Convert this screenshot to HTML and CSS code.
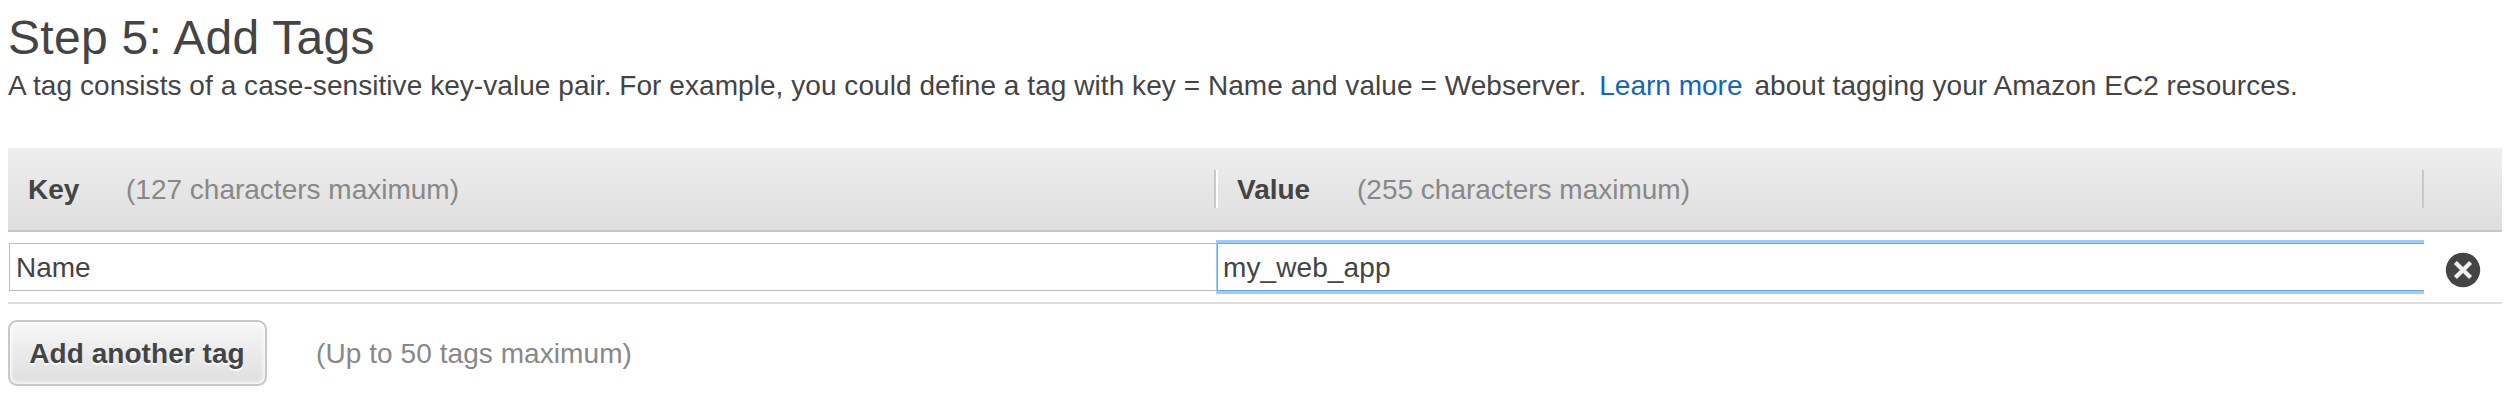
FILE: index.html
```html
<!DOCTYPE html>
<html lang="en">
<head>
<meta charset="utf-8">
<title>Step 5: Add Tags</title>
<link rel="stylesheet" href="styles.css">
</head>
<body>
<main class="page">
  <h1 class="title">Step 5: Add Tags</h1>
  <p class="intro"><span class="lead">A tag consists of a case-sensitive key-value pair. For example, you could define a tag with key = Name and value = Webserver.</span><a class="link" href="#">Learn more</a><span class="tail">about tagging your Amazon EC2 resources.</span></p>
  <section class="table">
    <div class="row head">
      <div class="cell"><strong class="label key">Key</strong><span class="hint">(127 characters maximum)</span></div>
      <div class="cell"><strong class="label value">Value</strong><span class="hint">(255 characters maximum)</span></div>
      <div class="cell"></div>
    </div>
    <div class="row body">
      <div class="field">Name</div>
      <div class="field focused">my_web_app</div>
      <button class="remove" aria-label="Remove">
        <svg width="36" height="36" viewBox="0 0 36 36"><circle cx="18" cy="18" r="17.2" fill="#444"/><path d="M10.4 10.4 25.6 25.6M25.6 10.4 10.4 25.6" stroke="#eee" stroke-width="4.2"/></svg>
      </button>
    </div>
  </section>
  <div class="actions">
    <button class="add">Add another tag</button>
    <span class="hint limit">(Up to 50 tags maximum)</span>
  </div>
</main>
</body>
</html>
```
FILE: styles.css
```css
* { box-sizing: border-box; }
body { margin: 0; background: #fff; color: #444; font: 28px/34px "Liberation Sans", Arial, sans-serif; }
.page { padding: 0 6px 0 8px; }
.title { margin: 0; height: 64px; padding-top: 10px; overflow: hidden; font-size: 48px; line-height: 56px; font-weight: 400; letter-spacing: 0.3px; white-space: nowrap; }
.intro { margin: 0; height: 84px; padding-top: 5px; display: flex; white-space: nowrap; }
.lead { letter-spacing: 0.055px; }
.link { color: #1166bb; text-decoration: none; margin-left: 13px; }
.tail { margin-left: 12px; letter-spacing: 0.04px; }
.row { display: grid; grid-template-columns: 1208px 1208px 1fr; }
.head { height: 84px; border-bottom: 2px solid #c8c8c8; background: linear-gradient(#eee, #dedede); align-items: center; }
.cell { height: 38px; display: flex; align-items: center; padding: 2px 0 0 19px; border-left: 2px solid #fff; border-right: 2px solid #c8c8c8; white-space: nowrap; }
.cell:first-child { border-left: 0; padding-left: 20px; }
.cell:last-child { border: 0; }
.label { flex: none; }
.key { width: 98px; }
.value { width: 120px; }
.hint { color: #888; }
.body { height: 72px; border-bottom: 2px solid #ddd; align-items: center; }
.field { height: 48px; margin-left: 1px; padding: 7px 6px; border: 1px solid #bbb; border-right: 0; background: #fff; white-space: nowrap; }
.focused { height: 54px; margin-left: 0; padding: 8px 6px; border: solid #9cf; border-width: 3px 0 3px 1px; box-shadow: inset 0 1px #72a7dc, inset 0 -1px #72a7dc, inset 1px 0 #72a7dc; letter-spacing: 0.1px; }
.remove { width: 36px; height: 36px; margin: 5px 0 0 21px; padding: 0; border: 0; background: none; }
.remove svg { display: block; }
.actions { display: flex; align-items: center; padding-top: 16px; }
.add { width: 259px; height: 66px; padding: 2px 1px 0 0; border: 2px solid #c8c8c8; border-radius: 9px; background: linear-gradient(#f7f7f7, #dedede); box-shadow: inset 0 0 4px 1px #fff; color: #444; font: bold 28px/34px "Liberation Sans", Arial, sans-serif; letter-spacing: 0.05px; text-shadow: 0 2px #fff; white-space: nowrap; }
.limit { margin-left: 49px; padding-top: 2px; letter-spacing: 0.07px; }
```
